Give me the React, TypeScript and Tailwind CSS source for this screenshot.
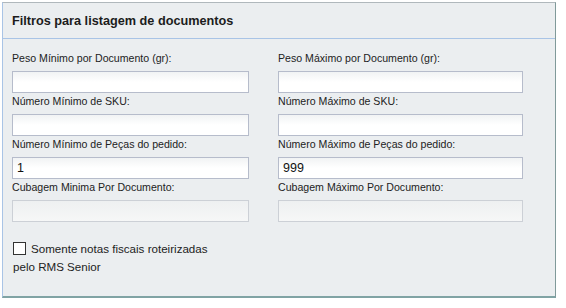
import React from "react"

interface FieldProps {
    label: string
    value?: string
    disabled?: boolean
}

const Field: React.FC<FieldProps> = ({ label, value, disabled }) => {
    return (
        <div className="flex flex-col">
            <label className="text-[10.6px] leading-[14px] text-[#222] h-[14px] mb-[6px]">{label}</label>
            <input
                type="text"
                defaultValue={value}
                disabled={disabled}
                className={
                    disabled
                        ? "h-[22px] border border-[#ccd0d6] bg-gradient-to-b from-[#eef0f1] to-[#f6f7f7] px-1 text-[12px] outline-none"
                        : "h-[22px] border border-[#b6bccb] bg-gradient-to-b from-[#f1f3f4] via-white to-white px-1 text-[12.5px] text-[#111] outline-none"
                }
            />
        </div>
    )
}

export default function App() {
    return (
        <div className="p-[2px] w-[566px] h-[308px] bg-white" style={{ fontFamily: '"Liberation Sans", Arial, sans-serif' }}>
            <div className="w-[554px] h-[296px] bg-[#ebeef0] border-l border-l-[#a9c4e6] border-t border-t-[#b0b8bc] border-r border-r-[#809a9a] border-b-2 border-b-[#80a3a4] flex flex-col">
                <div className="h-[36px] border-b border-b-[#a9c4e6] flex items-center pl-[9px] pt-[3px]">
                    <h1 className="text-[12.7px] font-bold text-[#1c1c1c]">Filtros para listagem de documentos</h1>
                </div>
                <div className="pt-[12px] pl-[9px] grid grid-cols-[237px_245px] gap-x-[29px] gap-y-[1px]">
                    <Field label="Peso Mínimo por Documento (gr):" />
                    <Field label="Peso Máximo por Documento (gr):" />
                    <Field label="Número Mínimo de SKU:" />
                    <Field label="Número Máximo de SKU:" />
                    <Field label="Número Mínimo de Peças do pedido:" value="1" />
                    <Field label="Número Máximo de Peças do pedido:" value="999" />
                    <Field label="Cubagem Minima Por Documento:" disabled />
                    <Field label="Cubagem Máximo Por Documento:" disabled />
                </div>
                <div className="pl-[10px] pt-[18px] w-[225px] text-[11.6px] leading-[18px] text-[#222]">
                    <span className="inline-block w-[13px] h-[13px] border border-[#333] bg-white align-[-2px] mr-[5px]"></span>
                    Somente notas fiscais roteirizadas pelo RMS Senior
                </div>
            </div>
        </div>
    )
}
